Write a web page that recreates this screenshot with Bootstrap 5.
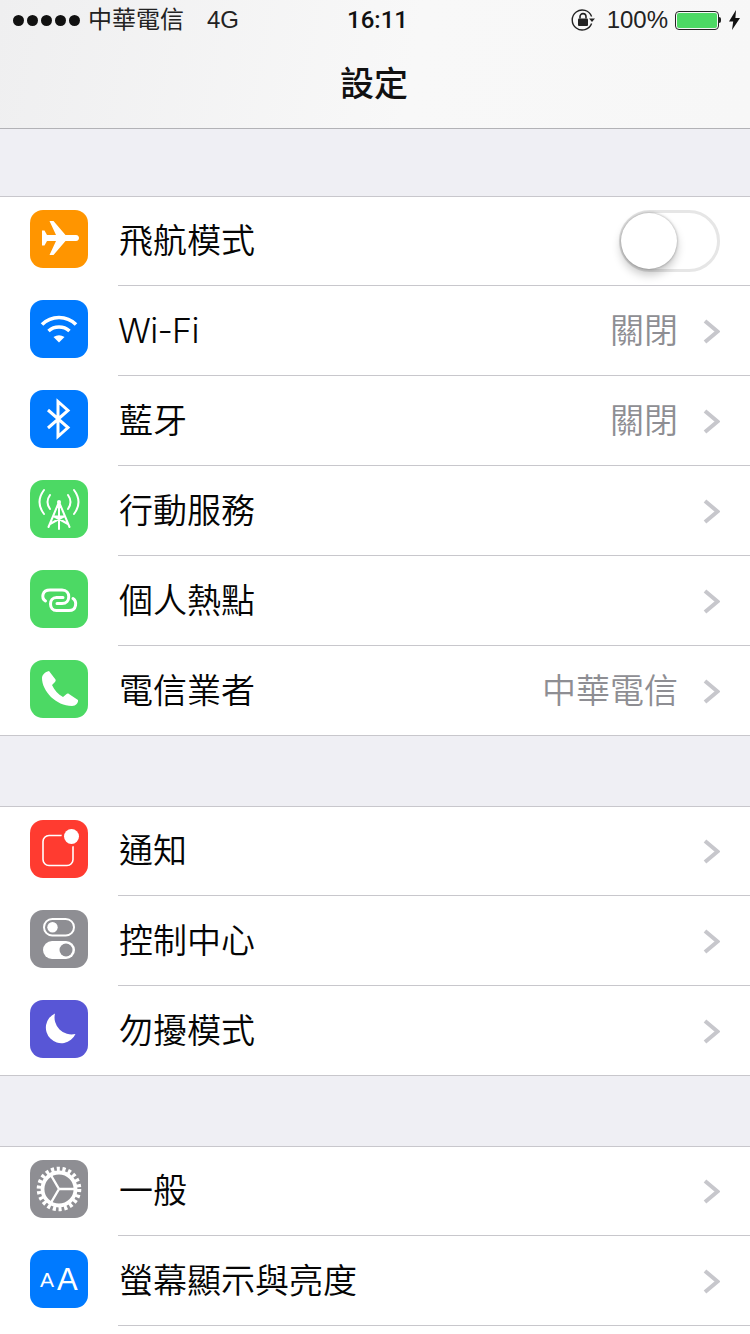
<!DOCTYPE html>
<html lang="zh-Hant">
<head>
<meta charset="utf-8">
<title>設定</title>
<link href="https://cdn.jsdelivr.net/npm/bootstrap@5.3.0/dist/css/bootstrap.min.css" rel="stylesheet">
<style>
html,body{height:1334px;overflow:hidden}
body{background:#efeff4;font-family:"Liberation Sans","Noto Sans CJK TC",sans-serif;color:#000}
.topbar{height:129px;background:linear-gradient(100deg,#efeff0,#f8f8f8 55%,#f7f7f7);border-bottom:1px solid #b2b2b6}
.statusline{height:40px;font-size:24px;line-height:40px;padding:0 10px 0 13px;color:#222}
.statusside{flex:1 1 0}
.sigdots{gap:3px;margin-right:8px}
.sigdot{width:11px;height:11px;border-radius:50%;background:#111}
.net{margin-left:23px}
.clock{font-family:Roboto,"Liberation Sans",sans-serif;font-weight:500;font-size:24px;color:#111;margin-left:2px}
.pageh{font-size:34px;font-weight:500;line-height:48px;margin:20px 2px 0 0;color:#111}
.setgroup{background:#fff;border-top:1px solid #c8c7cc;margin-top:67px}
.setgroup.tight{margin-top:70px}
.setrow{height:90px;padding-left:30px}
.setrow:first-child{margin-top:-1px}
.setrow.closing{border-bottom:1px solid #c8c7cc}
.setrow.tail{height:8px}
.rowicon{width:58px;height:58px;border-radius:13px;margin-top:14px;flex:none;display:block}
.rowbody{margin-left:30px;padding-right:30px;border-bottom:1px solid #c8c7cc;min-width:0}
.closing .rowbody{border-bottom:0}
.rowname{font-size:34px;line-height:48px;flex:1;font-weight:350;color:#050505;margin-left:1px}
.latinname{font-family:Inter,"Liberation Sans",sans-serif;font-weight:300;margin-left:0;letter-spacing:-.7px}
.rowvalue{font-size:34px;line-height:48px;font-weight:350;color:#8e8e93;margin-right:25px}
.chev{width:17px;height:25px;flex:none;margin-top:2px}
.swtrack{width:101px;height:62px;border:3px solid #e6e6e6;border-radius:31px;margin-left:-1px}
.swknob{width:56px;height:56px;border-radius:50%;background:#fff;margin-left:-1px;box-shadow:0 6px 10px rgba(0,0,0,.22),0 0 3px rgba(0,0,0,.35)}
.pct{margin:0 7px 0 11px}
.batt{width:44px;height:19px;border:1px solid #222;border-radius:4px;padding:1px}
.battfill{background:#4cd964;border-radius:2px}
.battnub{width:2px;height:6px;background:#222;border-radius:0 2px 2px 0;margin-right:8px}
.f-orange{background:#ff9500}.f-blue{background:#007aff}.f-green{background:#4cd964}.f-red{background:#ff3b30}.f-gray{background:#8e8e93}.f-indigo{background:#5856d6}
</style>
</head>
<body>
<header class="topbar">
  <div class="statusline d-flex align-items-center">
    <div class="statusside d-flex align-items-center">
      <div class="sigdots d-flex"><span class="sigdot"></span><span class="sigdot"></span><span class="sigdot"></span><span class="sigdot"></span><span class="sigdot"></span></div>
      <span>中華電信</span><span class="net">4G</span>
    </div>
    <div class="clock">16:11</div>
    <div class="statusside d-flex align-items-center justify-content-end">
      <svg width="25" height="24" viewBox="0 0 25 24" fill="none"><path d="M20.6 15.5A10 10 0 1 1 20.6 8.5" stroke="#222" stroke-width="1.4"/><path d="M18 10.5h6l-3 3.6z" fill="#222"/><rect x="7" y="10.5" width="10" height="7.5" rx="1" fill="#222"/><path d="M9 10.5V8.6a3 3 0 0 1 6 0v1.9" stroke="#222" stroke-width="1.6"/></svg>
      <span class="pct">100%</span>
      <div class="batt d-flex"><div class="battfill flex-grow-1"></div></div><div class="battnub"></div>
      <svg width="11" height="20" viewBox="0 0 11 20"><path d="M7 0 0 11.5h4.2L3 20l8-12H6.4z" fill="#111"/></svg>
    </div>
  </div>
  <h1 class="pageh text-center">設定</h1>
</header>

<section class="setgroup">
  <div class="setrow d-flex">
    <svg class="rowicon f-orange" viewBox="0 0 58 58"><path fill="#fff" d="M46 25H35.500L23.500 11h-4l6.500 14h-9l-2.500-4.500H12v15h2.500L17 31h9l-6.500 14h4l12-14h10.500c4 0 4-6 0-6z"/></svg>
    <div class="rowbody flex-grow-1 d-flex align-items-center"><span class="rowname">飛航模式</span>
      <div class="swtrack d-flex align-items-center"><div class="swknob"></div></div></div>
  </div>
  <div class="setrow d-flex">
    <svg class="rowicon f-blue" viewBox="0 0 58 58" fill="none"><path stroke="#fff" stroke-width="3.600" d="M12 24.500a24 24 0 0 1 34 0M18.500 31a16 16 0 0 1 21 0"/><path fill="#fff" d="M23.500 37q5.500-3.500 11 0L29 42.500z"/></svg>
    <div class="rowbody flex-grow-1 d-flex align-items-center"><span class="rowname latinname">Wi-Fi</span><span class="rowvalue">關閉</span>
      <svg class="chev" viewBox="0 0 17 25" fill="none"><path d="M2 2l12.500 10.500L2 23" stroke="#c7c7cc" stroke-width="4"/></svg></div>
  </div>
  <div class="setrow d-flex">
    <svg class="rowicon f-blue" viewBox="0 0 58 58" fill="none"><path stroke="#fff" stroke-width="3" d="M18 20l20 17.500L28 46.500V11.500L38 20.500 18 38"/></svg>
    <div class="rowbody flex-grow-1 d-flex align-items-center"><span class="rowname">藍牙</span><span class="rowvalue">關閉</span>
      <svg class="chev" viewBox="0 0 17 25" fill="none"><path d="M2 2l12.500 10.500L2 23" stroke="#c7c7cc" stroke-width="4"/></svg></div>
  </div>
  <div class="setrow d-flex">
    <svg class="rowicon f-green" viewBox="0 0 58 58" fill="none"><g stroke="#fff" stroke-width="2" stroke-linecap="round"><path d="M14 10q-9 12 0 24M20 15q-5 7 0 14M44 10q9 12 0 24M38 15q5 7 0 14"/><path d="M29 22L18.500 47M29 22L39.500 47M29 22V49M23.500 36.500L34.500 36.500M20 44L34.500 36M38 44L23.500 36"/></g><circle cx="29" cy="22" r="2" fill="#fff"/></svg>
    <div class="rowbody flex-grow-1 d-flex align-items-center"><span class="rowname">行動服務</span>
      <svg class="chev" viewBox="0 0 17 25" fill="none"><path d="M2 2l12.500 10.500L2 23" stroke="#c7c7cc" stroke-width="4"/></svg></div>
  </div>
  <div class="setrow d-flex">
    <svg class="rowicon f-green" viewBox="0 0 58 58" fill="none"><path stroke="#fff" stroke-width="3" stroke-linecap="round" d="M15.500 31C11 28 12 20 20 20H32C41 20 41 33.500 32 33.500H27M33 27.500H26.500C18.500 27.500 18.500 40.500 26.500 40.500H39C47 40.500 47 31 43 28.500"/></svg>
    <div class="rowbody flex-grow-1 d-flex align-items-center"><span class="rowname">個人熱點</span>
      <svg class="chev" viewBox="0 0 17 25" fill="none"><path d="M2 2l12.500 10.500L2 23" stroke="#c7c7cc" stroke-width="4"/></svg></div>
  </div>
  <div class="setrow closing d-flex">
    <svg class="rowicon f-green" viewBox="0 0 58 58"><path fill="#fff" d="M19 11l6.500 8.500c.5 1 0 2-1 3L22 25c2.500 5.500 6 9 11 12l3-2.500c1-1 2-1.200 3-.5l9 6c.5 2.500-2 6-6 6C26 46 12 31 12 18c0-3 3-6 7-7z"/></svg>
    <div class="rowbody flex-grow-1 d-flex align-items-center"><span class="rowname">電信業者</span><span class="rowvalue">中華電信</span>
      <svg class="chev" viewBox="0 0 17 25" fill="none"><path d="M2 2l12.500 10.500L2 23" stroke="#c7c7cc" stroke-width="4"/></svg></div>
  </div>
</section>

<section class="setgroup tight">
  <div class="setrow d-flex">
    <svg class="rowicon f-red" viewBox="0 0 58 58" fill="none"><rect x="13" y="15.500" width="30" height="30" rx="6" stroke="#fff" stroke-width="1.600"/><circle cx="41.500" cy="16.500" r="10" fill="#ff3b30"/><circle cx="41.500" cy="16.500" r="7.500" fill="#fff"/></svg>
    <div class="rowbody flex-grow-1 d-flex align-items-center"><span class="rowname">通知</span>
      <svg class="chev" viewBox="0 0 17 25" fill="none"><path d="M2 2l12.500 10.500L2 23" stroke="#c7c7cc" stroke-width="4"/></svg></div>
  </div>
  <div class="setrow d-flex">
    <svg class="rowicon f-gray" viewBox="0 0 58 58" fill="none"><rect x="14" y="9" width="30" height="16.500" rx="8.250" stroke="#fff" stroke-width="2"/><circle cx="22.500" cy="17.250" r="5.200" fill="#fff"/><rect x="13" y="31" width="32" height="18" rx="9" fill="#fff"/><circle cx="36" cy="40" r="6.500" fill="#8e8e93"/></svg>
    <div class="rowbody flex-grow-1 d-flex align-items-center"><span class="rowname">控制中心</span>
      <svg class="chev" viewBox="0 0 17 25" fill="none"><path d="M2 2l12.500 10.500L2 23" stroke="#c7c7cc" stroke-width="4"/></svg></div>
  </div>
  <div class="setrow closing d-flex">
    <svg class="rowicon f-indigo" viewBox="0 0 58 58"><path fill="#fff" d="M25 13.500A15.500 15.500 0 1 0 45.500 34 17 17 0 0 1 25 13.500z"/></svg>
    <div class="rowbody flex-grow-1 d-flex align-items-center"><span class="rowname">勿擾模式</span>
      <svg class="chev" viewBox="0 0 17 25" fill="none"><path d="M2 2l12.500 10.500L2 23" stroke="#c7c7cc" stroke-width="4"/></svg></div>
  </div>
</section>

<section class="setgroup tight">
  <div class="setrow d-flex">
    <svg class="rowicon f-gray" viewBox="0 0 58 58" fill="none"><g stroke="#fff"><circle cx="29" cy="29" r="20" stroke-width="4.600" stroke-dasharray="3.100 2.612"/><circle cx="29" cy="29" r="16.500" stroke-width="3.800"/><path stroke-width="2.400" d="M29 29H46M29 29L20.500 14.500M29 29L20.500 43.500"/></g></svg>
    <div class="rowbody flex-grow-1 d-flex align-items-center"><span class="rowname">一般</span>
      <svg class="chev" viewBox="0 0 17 25" fill="none"><path d="M2 2l12.500 10.500L2 23" stroke="#c7c7cc" stroke-width="4"/></svg></div>
  </div>
  <div class="setrow d-flex">
    <svg class="rowicon f-blue" viewBox="0 0 58 58"><text x="10" y="37" font-size="21" fill="#fff" font-family="Liberation Sans">A</text><text x="27" y="40" font-size="31" fill="#fff" font-family="Liberation Sans">A</text></svg>
    <div class="rowbody flex-grow-1 d-flex align-items-center"><span class="rowname">螢幕顯示與亮度</span>
      <svg class="chev" viewBox="0 0 17 25" fill="none"><path d="M2 2l12.500 10.500L2 23" stroke="#c7c7cc" stroke-width="4"/></svg></div>
  </div>
  <div class="setrow tail"></div>
</section>
</body>
</html>
